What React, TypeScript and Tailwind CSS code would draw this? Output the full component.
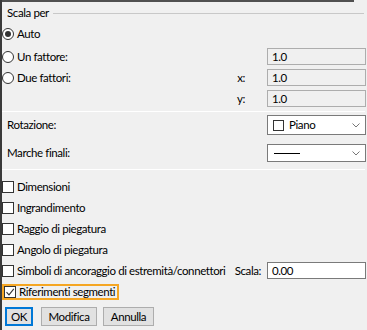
const font = { fontFamily: 'Lato, "Noto Sans", sans-serif' };

const Radio = ({ checked, label }: { checked?: boolean; label: string }) => (
  <div className="flex items-center gap-[3px] whitespace-nowrap">
    <span className="w-[12px] h-[12px] rounded-full border border-[#333] bg-white flex items-center justify-center">
      {checked && <span className="w-[6px] h-[6px] rounded-full bg-[#333]" />}
    </span>
    <span>{label}</span>
  </div>
);

const Check = ({ checked, label }: { checked?: boolean; label: string }) => (
  <div className="flex items-center gap-[3px] whitespace-nowrap">
    <span className="w-[12px] h-[12px] border border-[#333] bg-white flex items-center justify-center">
      {checked && (
        <svg width="10" height="10" viewBox="0 0 10 10">
          <path d="M1.5 5.2 L4 7.8 L8.8 1.8" fill="none" stroke="#333" strokeWidth="1.1" />
        </svg>
      )}
    </span>
    <span>{label}</span>
  </div>
);

const Field = ({ value, white }: { value: string; white?: boolean }) => (
  <div
    className={`w-[99px] h-[17px] border flex items-center px-[4px] ${
      white ? "bg-white border-[#7a7a7a]" : "bg-[#f0f0f0] border-[#adadad]"
    }`}
  >
    {value}
  </div>
);

const Chevron = () => (
  <svg width="8" height="5" viewBox="0 0 8 5" className="ml-auto">
    <path d="M0.5 0.5 L4 4 L7.5 0.5" fill="none" stroke="#777" strokeWidth="1" />
  </svg>
);

const Sep = () => <div className="h-px bg-[#c8c8c8] border-b border-white mr-[2px]" />;

export default function App() {
  return (
    <div
      className="w-[367px] h-[330px] bg-[#f0f0f0] text-[11.5px] tracking-[-0.4px] text-black border-l-2 border-[#3a3a3a] flex flex-col overflow-hidden leading-none whitespace-nowrap"
      style={font}
    >
      <div className="h-[2px] w-[352px] bg-[#505050]" />
      <div className="h-[22px] flex items-center pl-[5px] gap-[4px]">
        <span>Scala per</span>
        <div className="flex-1 h-px bg-[#c8c8c8] mr-[3px]" />
      </div>
      <div className="h-[20px] flex items-center">
        <Radio checked label="Auto" />
      </div>
      <div className="mt-[2px] h-[21px] flex items-center">
        <Radio label="Un fattore:" />
        <div className="ml-auto mr-[1px]">
          <Field value="1.0" />
        </div>
      </div>
      <div className="h-[21px] flex items-center">
        <Radio label="Due fattori:" />
        <span className="ml-auto mr-[22px]">x:</span>
        <div className="mr-[1px]">
          <Field value="1.0" />
        </div>
      </div>
      <div className="h-[21px] flex items-center">
        <span className="ml-auto mr-[22px]">y:</span>
        <div className="mr-[1px]">
          <Field value="1.0" />
        </div>
      </div>
      <div className="mt-[2px]">
        <Sep />
      </div>
      <div className="mt-[3px] h-[20px] flex items-center pl-[5px]">
        <span>Rotazione:</span>
        <div className="ml-auto mr-[1px] w-[99px] h-[20px] bg-white border border-[#7a7a7a] flex items-center pl-[5px] pr-[5px] gap-[5px]">
          <span className="w-[11px] h-[11px] border border-[#333]" />
          <span>Piano</span>
          <Chevron />
        </div>
      </div>
      <div className="mt-[9px] h-[18px] flex items-center pl-[5px]">
        <span>Marche finali:</span>
        <div className="ml-auto mr-[1px] w-[99px] h-[18px] bg-white border border-[#7a7a7a] flex items-center pl-[6px] pr-[5px]">
          <span className="w-[26px] h-px bg-black" />
          <Chevron />
        </div>
      </div>
      <div className="mt-[7px]">
        <Sep />
      </div>
      <div className="mt-[6px] h-[21px] flex items-center">
        <Check label="Dimensioni" />
      </div>
      <div className="h-[21px] flex items-center">
        <Check label="Ingrandimento" />
      </div>
      <div className="h-[21px] flex items-center">
        <Check label="Raggio di piegatura" />
      </div>
      <div className="h-[21px] flex items-center">
        <Check label="Angolo di piegatura" />
      </div>
      <div className="h-[21px] flex items-center">
        <Check label="Simboli di ancoraggio di estremità/connettori" />
        <span className="ml-auto mr-[6px]">Scala:</span>
        <div className="mr-[1px]">
          <Field value="0.00" white />
        </div>
      </div>
      <div className="h-[21px] flex items-center">
        <div className="border-2 border-[#f5a623] h-[16px] flex items-center pr-[2px]">
          <Check checked label="Riferimenti segmenti" />
        </div>
      </div>
      <div className="mt-[5px] flex gap-[6px] pl-[3px]">
        <button className="w-[28px] h-[19px] bg-[#e1e1e1] border-2 border-[#0078d7] flex items-center justify-center">
          OK
        </button>
        <button className="ml-[2px] w-[56px] h-[19px] bg-[#e1e1e1] border border-[#adadad] flex items-center justify-center">
          Modifica
        </button>
        <button className="w-[51px] h-[19px] bg-[#e1e1e1] border border-[#adadad] flex items-center justify-center">
          Annulla
        </button>
      </div>
    </div>
  );
}
